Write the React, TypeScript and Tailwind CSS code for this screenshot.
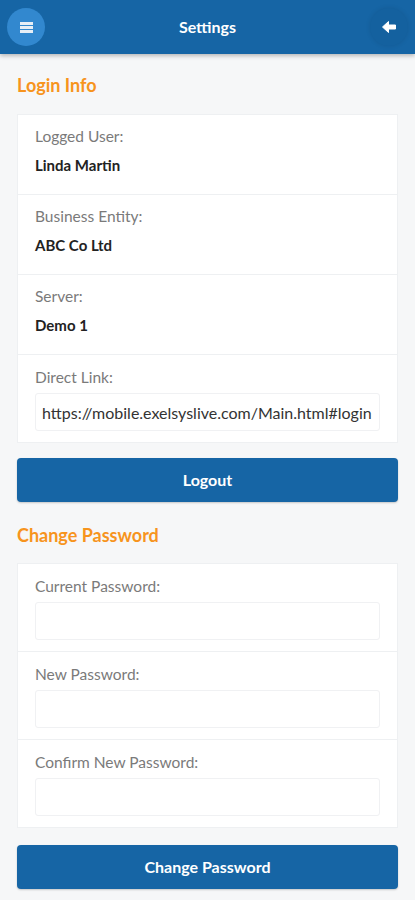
import React from "react";

const font = { fontFamily: 'Lato, "Open Sans", "Liberation Sans", sans-serif' };

function InfoRow({ label, value, last }: { label: string; value: string; last?: boolean }) {
  return (
    <div className={`px-[17px] pt-[12px] pb-[19px] ${last ? "" : "border-b border-[#eef0f2]"}`}>
      <div className="text-[15.5px] leading-[18px] text-[#7a7a7a]">{label}</div>
      <div className="mt-[11px] text-[15px] leading-[19px] font-bold text-[#222]">{value}</div>
    </div>
  );
}

function FieldRow({ label, value, last }: { label: string; value?: string; last?: boolean }) {
  return (
    <div className={`px-[17px] pt-[13px] pb-[11px] ${last ? "" : "border-b border-[#eef0f2]"}`}>
      <div className="text-[15.5px] leading-[18px] text-[#7a7a7a]">{label}</div>
      <input
        readOnly
        value={value ?? ""}
        className="mt-[7px] w-full h-[38px] px-[6px] rounded-[3px] border border-[#f0f1f3] bg-white text-[16px] text-[#333] outline-none"
        style={font}
      />
    </div>
  );
}

function SectionTitle({ children }: { children: React.ReactNode }) {
  return <h2 className="px-[17px] text-[18px] leading-[22px] font-bold text-[#f7941d]">{children}</h2>;
}

function BlueButton({ children }: { children: React.ReactNode }) {
  return (
    <button className="mx-[17px] h-[44px] rounded-[4px] bg-[#1665a5] text-white text-[16px] font-bold shadow-[0_1px_2px_rgba(0,0,0,0.2)]">
      {children}
    </button>
  );
}

export default function App() {
  return (
    <div className="min-h-[900px] w-full bg-[#f6f7f8] flex flex-col" style={font}>
      <header className="h-[54px] bg-[#1665a5] flex items-center justify-between px-[7px] shadow-[0_2px_4px_rgba(0,0,0,0.25)]">
        <button className="w-[38px] h-[38px] rounded-full bg-[#3288cf] flex items-center justify-center">
          <svg width="13" height="11" viewBox="0 0 13 11">
            <rect x="0" y="0" width="13" height="3" fill="#e6eef6" />
            <rect x="0" y="4" width="13" height="3" fill="#e6eef6" />
            <rect x="0" y="8" width="13" height="3" fill="#e6eef6" />
          </svg>
        </button>
        <div className="text-white text-[16px] font-bold">Settings</div>
        <button className="w-[38px] h-[38px] rounded-full bg-[#14619f] shadow-[0_0_5px_rgba(0,0,0,0.1)] flex items-center justify-center">
          <svg width="14" height="12" viewBox="0 0 14 12">
            <path d="M6.5 0.5 L0.5 6 L6.5 11.5 L6.5 8 L13.5 8 L13.5 4 L6.5 4 Z" fill="#fff" stroke="#fff" strokeWidth="1" strokeLinejoin="round" />
          </svg>
        </button>
      </header>

      <div className="mt-[20px]">
        <SectionTitle>Login Info</SectionTitle>
      </div>
      <div className="mt-[18px] mx-[17px] bg-white border border-[#eef0f2]">
        <InfoRow label="Logged User:" value="Linda Martin" />
        <InfoRow label="Business Entity:" value="ABC Co Ltd" />
        <InfoRow label="Server:" value="Demo 1" />
        <FieldRow label="Direct Link:" value="https://mobile.exelsyslive.com/Main.html#login" last />
      </div>
      <div className="mt-[15px] flex flex-col">
        <BlueButton>Logout</BlueButton>
      </div>

      <div className="mt-[22px]">
        <SectionTitle>Change Password</SectionTitle>
      </div>
      <div className="mt-[17px] mx-[17px] bg-white border border-[#eef0f2]">
        <FieldRow label="Current Password:" />
        <FieldRow label="New Password:" />
        <FieldRow label="Confirm New Password:" last />
      </div>
      <div className="mt-[17px] flex flex-col">
        <BlueButton>Change Password</BlueButton>
      </div>
    </div>
  );
}
